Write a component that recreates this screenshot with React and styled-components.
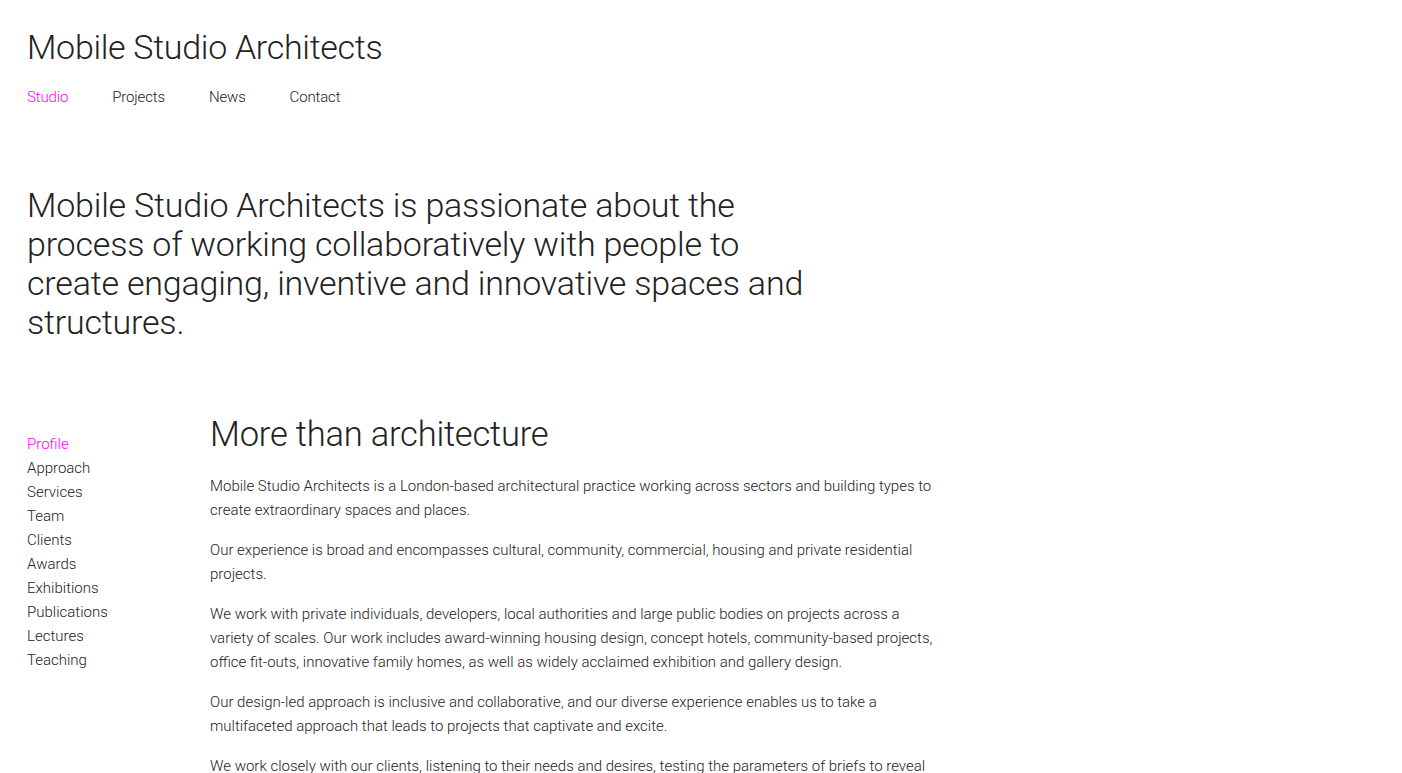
import React from "react";
import styled, { createGlobalStyle } from "styled-components";

const Global = createGlobalStyle`
  html, body { margin: 0; padding: 0; background: #fff; }
  body {
    font-family: Roboto, "Noto Sans", sans-serif;
    font-weight: 300;
    color: #222;
    -webkit-font-smoothing: antialiased;
  }
  * { box-sizing: border-box; }
`;

const Page = styled.div`
  padding: 26px 27px 0;
`;

const Header = styled.header`
  display: flex;
  flex-direction: column;
`;

const SiteTitle = styled.h1`
  margin: 0;
  font-size: 34px;
  font-weight: 300;
  line-height: 42px;
  letter-spacing: -0.3px;
  color: #222;
`;

const Nav = styled.nav`
  display: flex;
  gap: 44px;
  margin-top: 19px;
`;

const NavLink = styled.a`
  font-size: 15px;
  line-height: 20px;
  letter-spacing: -0.15px;
  color: ${(p) => (p.$active ? "#ff00ff" : "#222")};
  text-decoration: none;
`;

const Intro = styled.p`
  margin: 79px 0 0;
  max-width: 800px;
  font-size: 34px;
  line-height: 39px;
  font-weight: 300;
  letter-spacing: -0.2px;
`;

const Body = styled.div`
  display: flex;
  margin-top: 71px;
`;

const SideNav = styled.ul`
  list-style: none;
  margin: 0;
  padding: 19px 0 0;
  width: 183px;
  flex-shrink: 0;
`;

const SideItem = styled.li`
  font-size: 15px;
  line-height: 24px;
  color: ${(p) => (p.$active ? "#ff00ff" : "#222")};
`;

const Main = styled.main`
  width: 735px;
`;

const Heading = styled.h2`
  margin: 0 0 19px;
  font-size: 34.5px;
  line-height: 42px;
  font-weight: 300;
  letter-spacing: -0.2px;
`;

const Para = styled.p`
  margin: 0 0 16px;
  font-size: 15px;
  line-height: 24px;
`;

const navItems = ["Studio", "Projects", "News", "Contact"];
const sideItems = [
  "Profile",
  "Approach",
  "Services",
  "Team",
  "Clients",
  "Awards",
  "Exhibitions",
  "Publications",
  "Lectures",
  "Teaching",
];

const paras = [
  "Mobile Studio Architects is a London-based architectural practice working across sectors and building types to create extraordinary spaces and places.",
  "Our experience is broad and encompasses cultural, community, commercial, housing and private residential projects.",
  "We work with private individuals, developers, local authorities and large public bodies on projects across a variety of scales. Our work includes award-winning housing design, concept hotels, community-based projects, office fit-outs, innovative family homes, as well as widely acclaimed exhibition and gallery design.",
  "Our design-led approach is inclusive and collaborative, and our diverse experience enables us to take a multifaceted approach that leads to projects that captivate and excite.",
  "We work closely with our clients, listening to their needs and desires, testing the parameters of briefs to reveal the full potential of every site and every project.",
];

export default function App() {
  return (
    <>
      <Global />
      <Page>
        <Header>
          <SiteTitle>Mobile Studio Architects</SiteTitle>
          <Nav>
            {navItems.map((n, i) => (
              <NavLink key={n} href="#" $active={i === 0}>
                {n}
              </NavLink>
            ))}
          </Nav>
        </Header>
        <Intro>
          Mobile Studio Architects is passionate about the process of working
          collaboratively with people to create engaging, inventive and
          innovative spaces and structures.
        </Intro>
        <Body>
          <SideNav>
            {sideItems.map((s, i) => (
              <SideItem key={s} $active={i === 0}>
                {s}
              </SideItem>
            ))}
          </SideNav>
          <Main>
            <Heading>More than architecture</Heading>
            {paras.map((p, i) => (
              <Para key={i}>{p}</Para>
            ))}
          </Main>
        </Body>
      </Page>
    </>
  );
}
